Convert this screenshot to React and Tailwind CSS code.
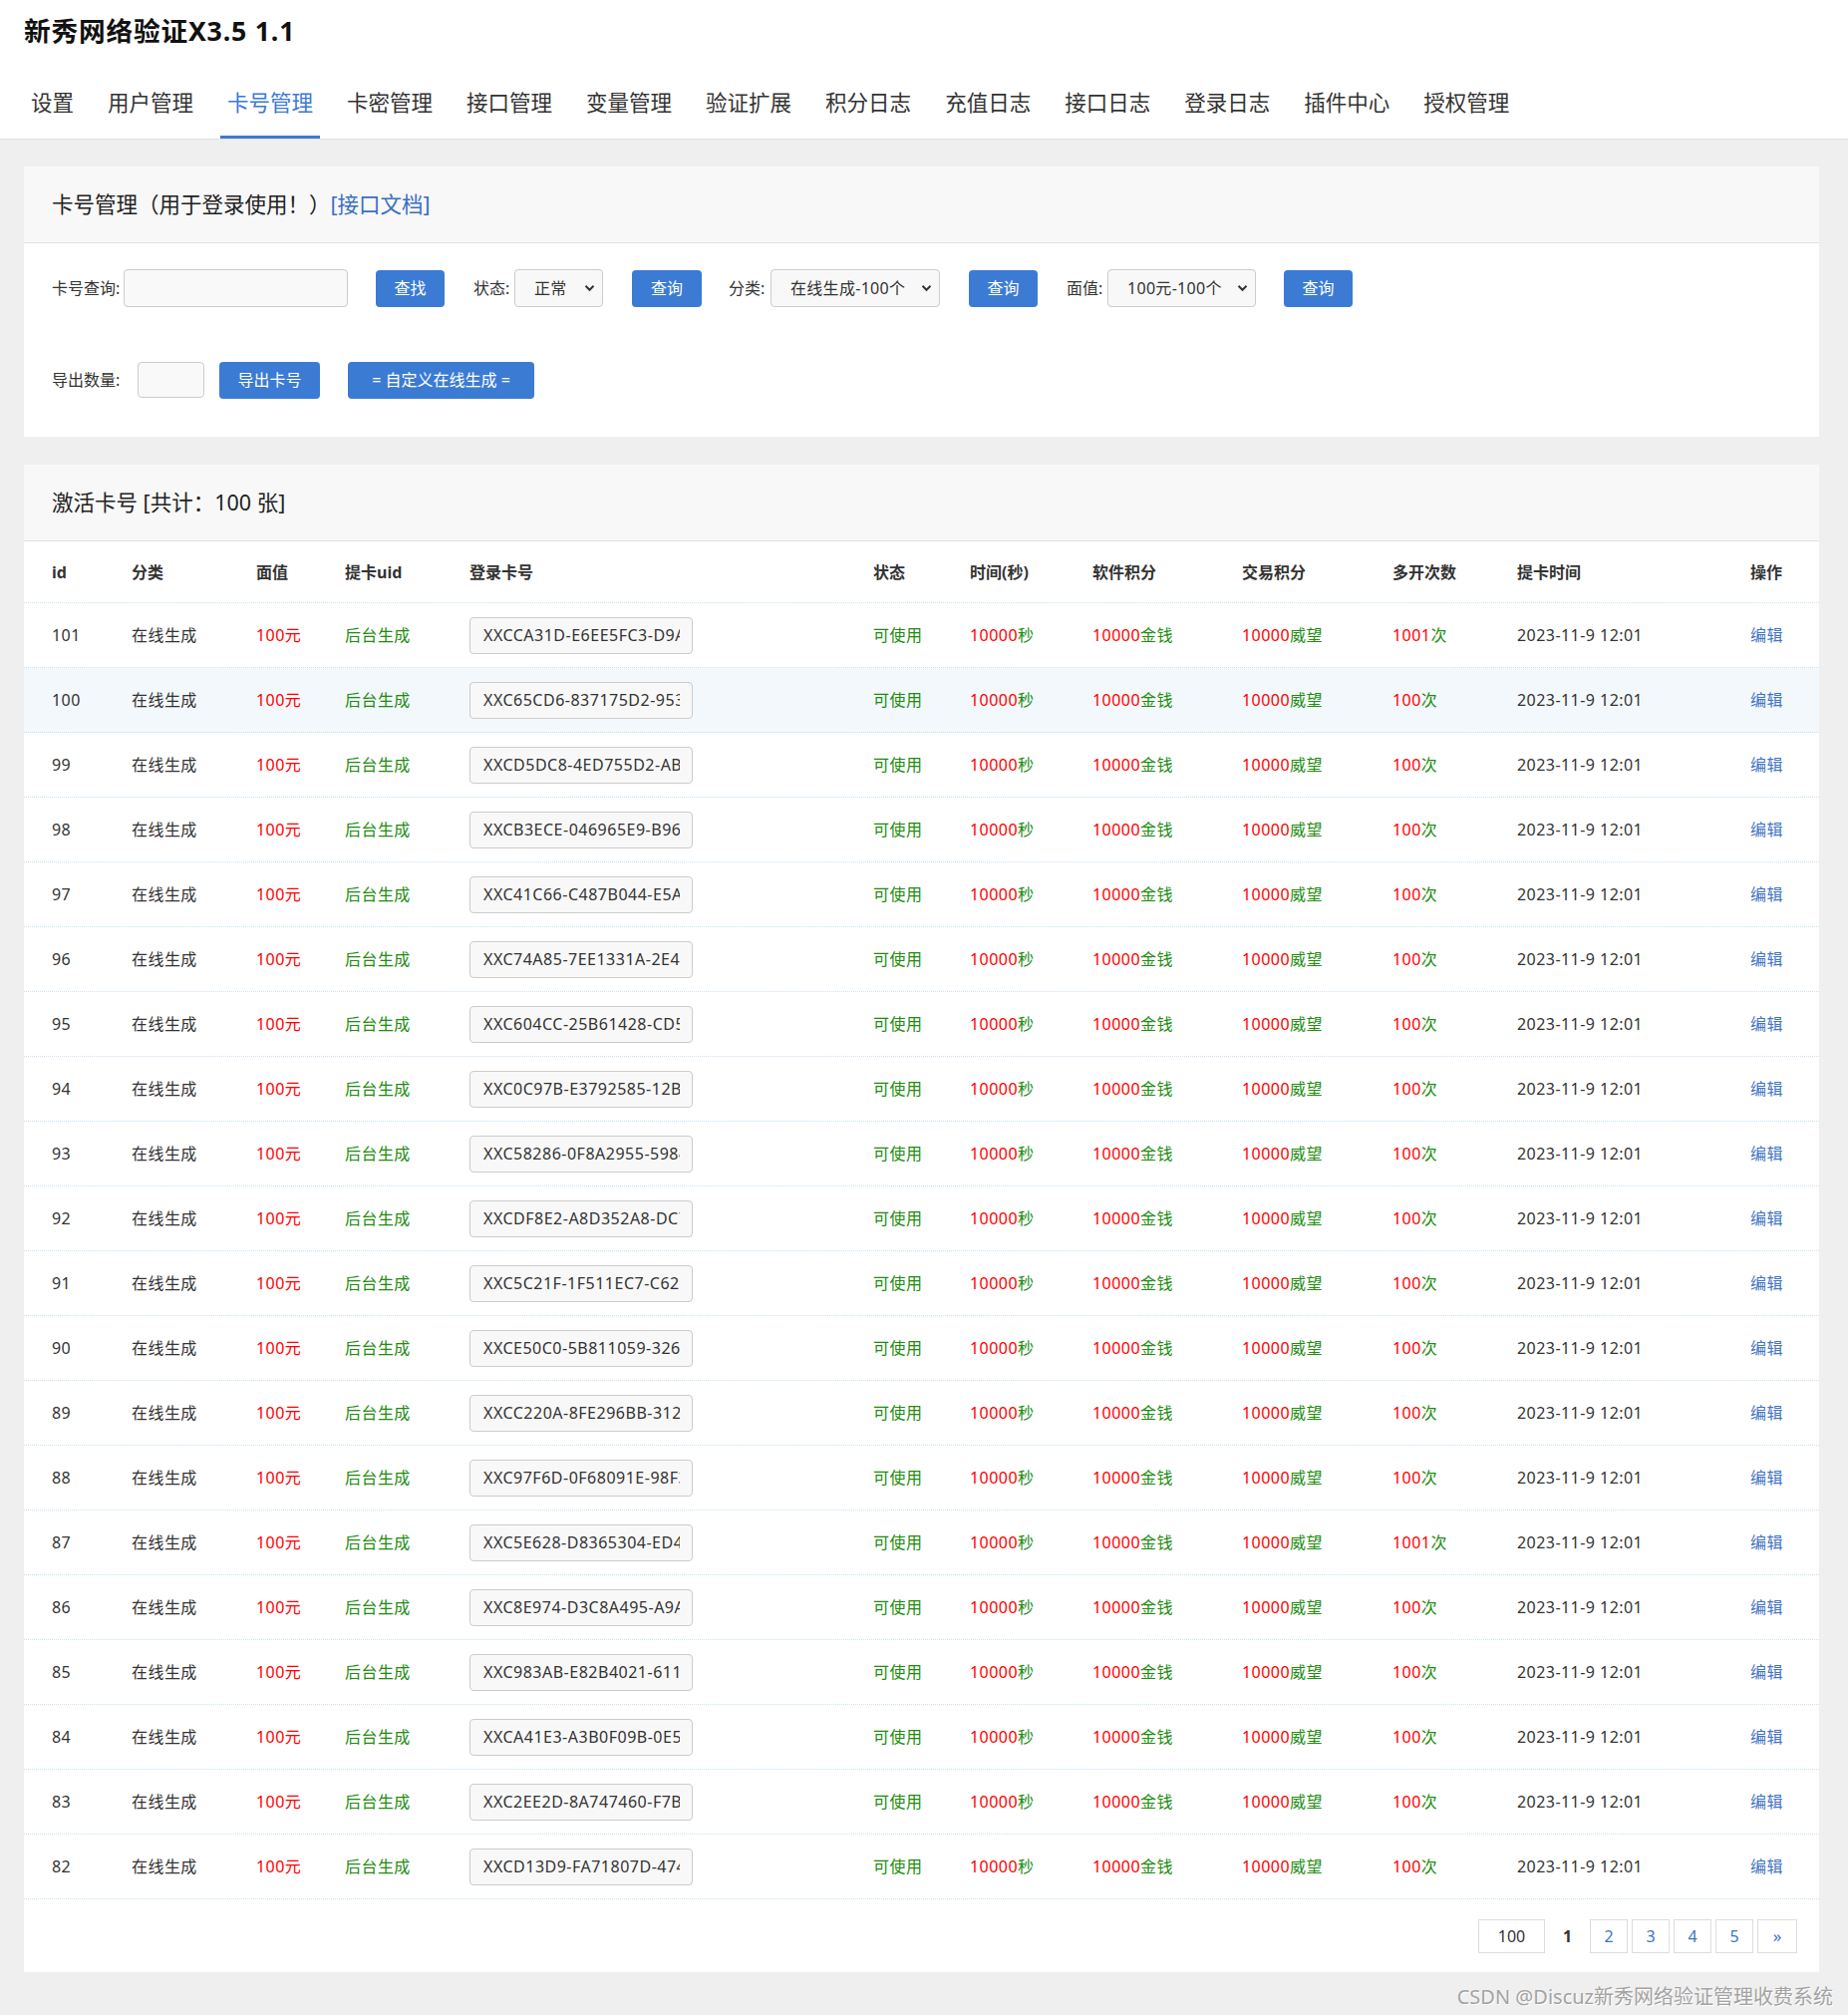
import React from "react";

const tabs = ["设置","用户管理","卡号管理","卡密管理","接口管理","变量管理","验证扩展","积分日志","充值日志","接口日志","登录日志","插件中心","授权管理"];

const rows = [
  [101, "XXCCA31D-E6EE5FC3-D9A41C7E", "1001"],
  [100, "XXC65CD6-837175D2-953A81F0", "100"],
  [99, "XXCD5DC8-4ED755D2-AB39C0E1", "100"],
  [98, "XXCB3ECE-046965E9-B96D21F4", "100"],
  [97, "XXC41C66-C487B044-E5A7B3D2", "100"],
  [96, "XXC74A85-7EE1331A-2E48F6C0", "100"],
  [95, "XXC604CC-25B61428-CD5E9A17", "100"],
  [94, "XXC0C97B-E3792585-12B6D4F8", "100"],
  [93, "XXC58286-0F8A2955-59841C3B", "100"],
  [92, "XXCDF8E2-A8D352A8-DC7A20E5", "100"],
  [91, "XXC5C21F-1F511EC7-C6294B8D", "100"],
  [90, "XXCE50C0-5B811059-32671FA4", "100"],
  [89, "XXCC220A-8FE296BB-312C5E90", "100"],
  [88, "XXC97F6D-0F68091E-98F3A2B6", "100"],
  [87, "XXC5E628-D8365304-ED4B71C9", "1001"],
  [86, "XXC8E974-D3C8A495-A9A0E6F2", "100"],
  [85, "XXC983AB-E82B4021-611F8C35", "100"],
  [84, "XXCA41E3-A3B0F09B-0E5D27A1", "100"],
  [83, "XXC2EE2D-8A747460-F7B94C06", "100"],
  [82, "XXCD13D9-FA71807D-4746E2B8", "100"],
];

const gridCols = "grid grid-cols-[80px_125px_89px_125px_405px_97px_123px_150px_151px_125px_234px_1fr] pl-[28px]";

function Chevron() {
  return (
    <svg width="11" height="8" viewBox="0 0 11 8" className="shrink-0">
      <path d="M1.5 1.8 L5.5 5.8 L9.5 1.8" fill="none" stroke="#333" strokeWidth="2" />
    </svg>
  );
}

function Select({ w, text }) {
  return (
    <div className={`${w} h-[38px] border border-[#ccc] rounded-[4px] bg-[#f8f8f8] flex items-center justify-between pl-[19px] pr-[7px] text-[16px] text-[#333] tracking-[0.3px]`}>
      <span className="whitespace-nowrap overflow-hidden">{text}</span>
      <Chevron />
    </div>
  );
}

function Btn({ w, children, cls = "" }) {
  return (
    <button className={`${w} ${cls} h-[37px] rounded-[4px] bg-[#3b7bd4] text-white text-[16px] leading-none flex items-center justify-center`}>
      {children}
    </button>
  );
}

const R = "text-[#ff0000]";
const G = "text-[#218c0e]";

export default function App() {
  return (
    <div className="w-[1854px] font-['Noto_Sans','Noto_Sans_CJK_SC',sans-serif] text-[#333]">
      <div className="bg-white border-b border-[#e0e0e0]">
        <div className="h-[63px] pl-[24px] flex items-center">
          <h1 className="text-[26.7px] font-bold leading-none text-[#111] tracking-[0.8px]">新秀网络验证X3.5 1.1</h1>
        </div>
        <nav className="flex h-[76px] pl-[24px] gap-[20px]">
          {tabs.map((t) => (
            <div
              key={t}
              className={`px-[7px] pt-[7px] flex items-center border-b-[3px] text-[21.5px] leading-none ${t === "卡号管理" ? "border-[#3b7ad3] text-[#3b7ad3]" : "border-transparent text-[#333]"}`}
            >
              {t}
            </div>
          ))}
        </nav>
      </div>

      <div className="relative bg-[#efefef] pt-[27px] pl-[24px] pr-[29px] pb-[43px]">
        {/* Panel 1 */}
        <div className="bg-white">
          <div className="h-[77px] bg-[#f8f8f8] border-b border-[#e0e0e0] px-[28px] flex items-center text-[21.5px] text-[#222]">
            卡号管理（用于登录使用！）<span className="text-[#3b6fc2]">[接口文档]</span>
          </div>
          <div className="pt-[26px] pb-[38px] px-[28px] text-[16px]">
            <div className="flex items-center h-[38px]">
              <span className="w-[72px] whitespace-nowrap">卡号查询:</span>
              <div className="w-[225px] h-[38px] border border-[#ccc] rounded-[4px] bg-[#f9f9f9]" />
              <Btn w="w-[69px]" cls="ml-[28px]">查找</Btn>
              <span className="ml-[29px] w-[41px] whitespace-nowrap">状态:</span>
              <Select w="w-[89px]" text="正常" />
              <Btn w="w-[70px]" cls="ml-[29px]">查询</Btn>
              <span className="ml-[27px] w-[42px] whitespace-nowrap">分类:</span>
              <Select w="w-[170px]" text="在线生成-100个" />
              <Btn w="w-[69px]" cls="ml-[29px]">查询</Btn>
              <span className="ml-[29px] w-[41px] whitespace-nowrap">面值:</span>
              <Select w="w-[149px]" text="100元-100个" />
              <Btn w="w-[69px]" cls="ml-[28px]">查询</Btn>
            </div>
            <div className="flex items-center h-[38px] mt-[54px]">
              <span className="w-[86px] whitespace-nowrap">导出数量:</span>
              <div className="w-[67px] h-[36px] border border-[#ccc] rounded-[4px] bg-[#f9f9f9]" />
              <Btn w="w-[101px]" cls="ml-[15px]">导出卡号</Btn>
              <Btn w="w-[187px]" cls="ml-[28px]">= 自定义在线生成 =</Btn>
            </div>
          </div>
        </div>

        {/* Panel 2 */}
        <div className="bg-white mt-[28px]">
          <div className="h-[77px] bg-[#f8f8f8] border-b border-[#e0e0e0] px-[28px] flex items-center text-[21.5px] text-[#222]">
            激活卡号 [共计：100 张]
          </div>
          <div className={`${gridCols} h-[62px] items-center font-bold text-[16px] border-b border-dotted border-[#c9e2f3] text-[#333]`}>
            <div>id</div>
            <div>分类</div>
            <div>面值</div>
            <div>提卡uid</div>
            <div>登录卡号</div>
            <div>状态</div>
            <div>时间(秒)</div>
            <div>软件积分</div>
            <div>交易积分</div>
            <div>多开次数</div>
            <div>提卡时间</div>
            <div>操作</div>
          </div>
          {rows.map(([id, card, multi], i) => (
            <div
              key={id}
              className={`${gridCols} h-[65px] items-center text-[16px] tracking-[0.45px] border-b border-dotted border-[#c9e2f3] whitespace-nowrap ${i === 1 ? "bg-[#f3f8fc]" : "bg-white"}`}
            >
              <div>{id}</div>
              <div>在线生成</div>
              <div className={R}>100元</div>
              <div className={G}>后台生成</div>
              <div>
                <input
                  readOnly
                  value={card}
                  className="w-[224px] h-[37px] border border-[#ccc] rounded-[4px] bg-[#f8f8f8] pl-[13px] pr-[12px] text-[16px] tracking-[0.5px] text-[#333] outline-none"
                />
              </div>
              <div className={G}>可使用</div>
              <div><span className={R}>10000</span><span className={G}>秒</span></div>
              <div><span className={R}>10000</span><span className={G}>金钱</span></div>
              <div><span className={R}>10000</span><span className={G}>威望</span></div>
              <div><span className={R}>{multi}</span><span className={G}>次</span></div>
              <div>2023-11-9 12:01</div>
              <div className="text-[#3f74c2]">编辑</div>
            </div>
          ))}
          <div className="flex justify-end pt-[20px] pb-[19px] pr-[22px] gap-[4px] text-[16px]">
            <div className="w-[67px] h-[34px] border border-[#ddd] flex items-center justify-center text-[#333]">100</div>
            <div className="w-[37px] h-[34px] flex items-center justify-center font-bold text-[#333]">1</div>
            {["2","3","4","5"].map((n) => (
              <div key={n} className="w-[38px] h-[34px] border border-[#ddd] flex items-center justify-center text-[#3f74c2]">{n}</div>
            ))}
            <div className="w-[40px] h-[34px] border border-[#ddd] flex items-center justify-center text-[#3f74c2] text-[17px]">»</div>
          </div>
        </div>

        <div className="absolute right-[15px] bottom-[6px] text-[20px] leading-[24px] text-[#a3a3a3] whitespace-nowrap [text-shadow:1px_1px_0_#ffffff]">
          CSDN @Discuz新秀网络验证管理收费系统
        </div>
      </div>
    </div>
  );
}
